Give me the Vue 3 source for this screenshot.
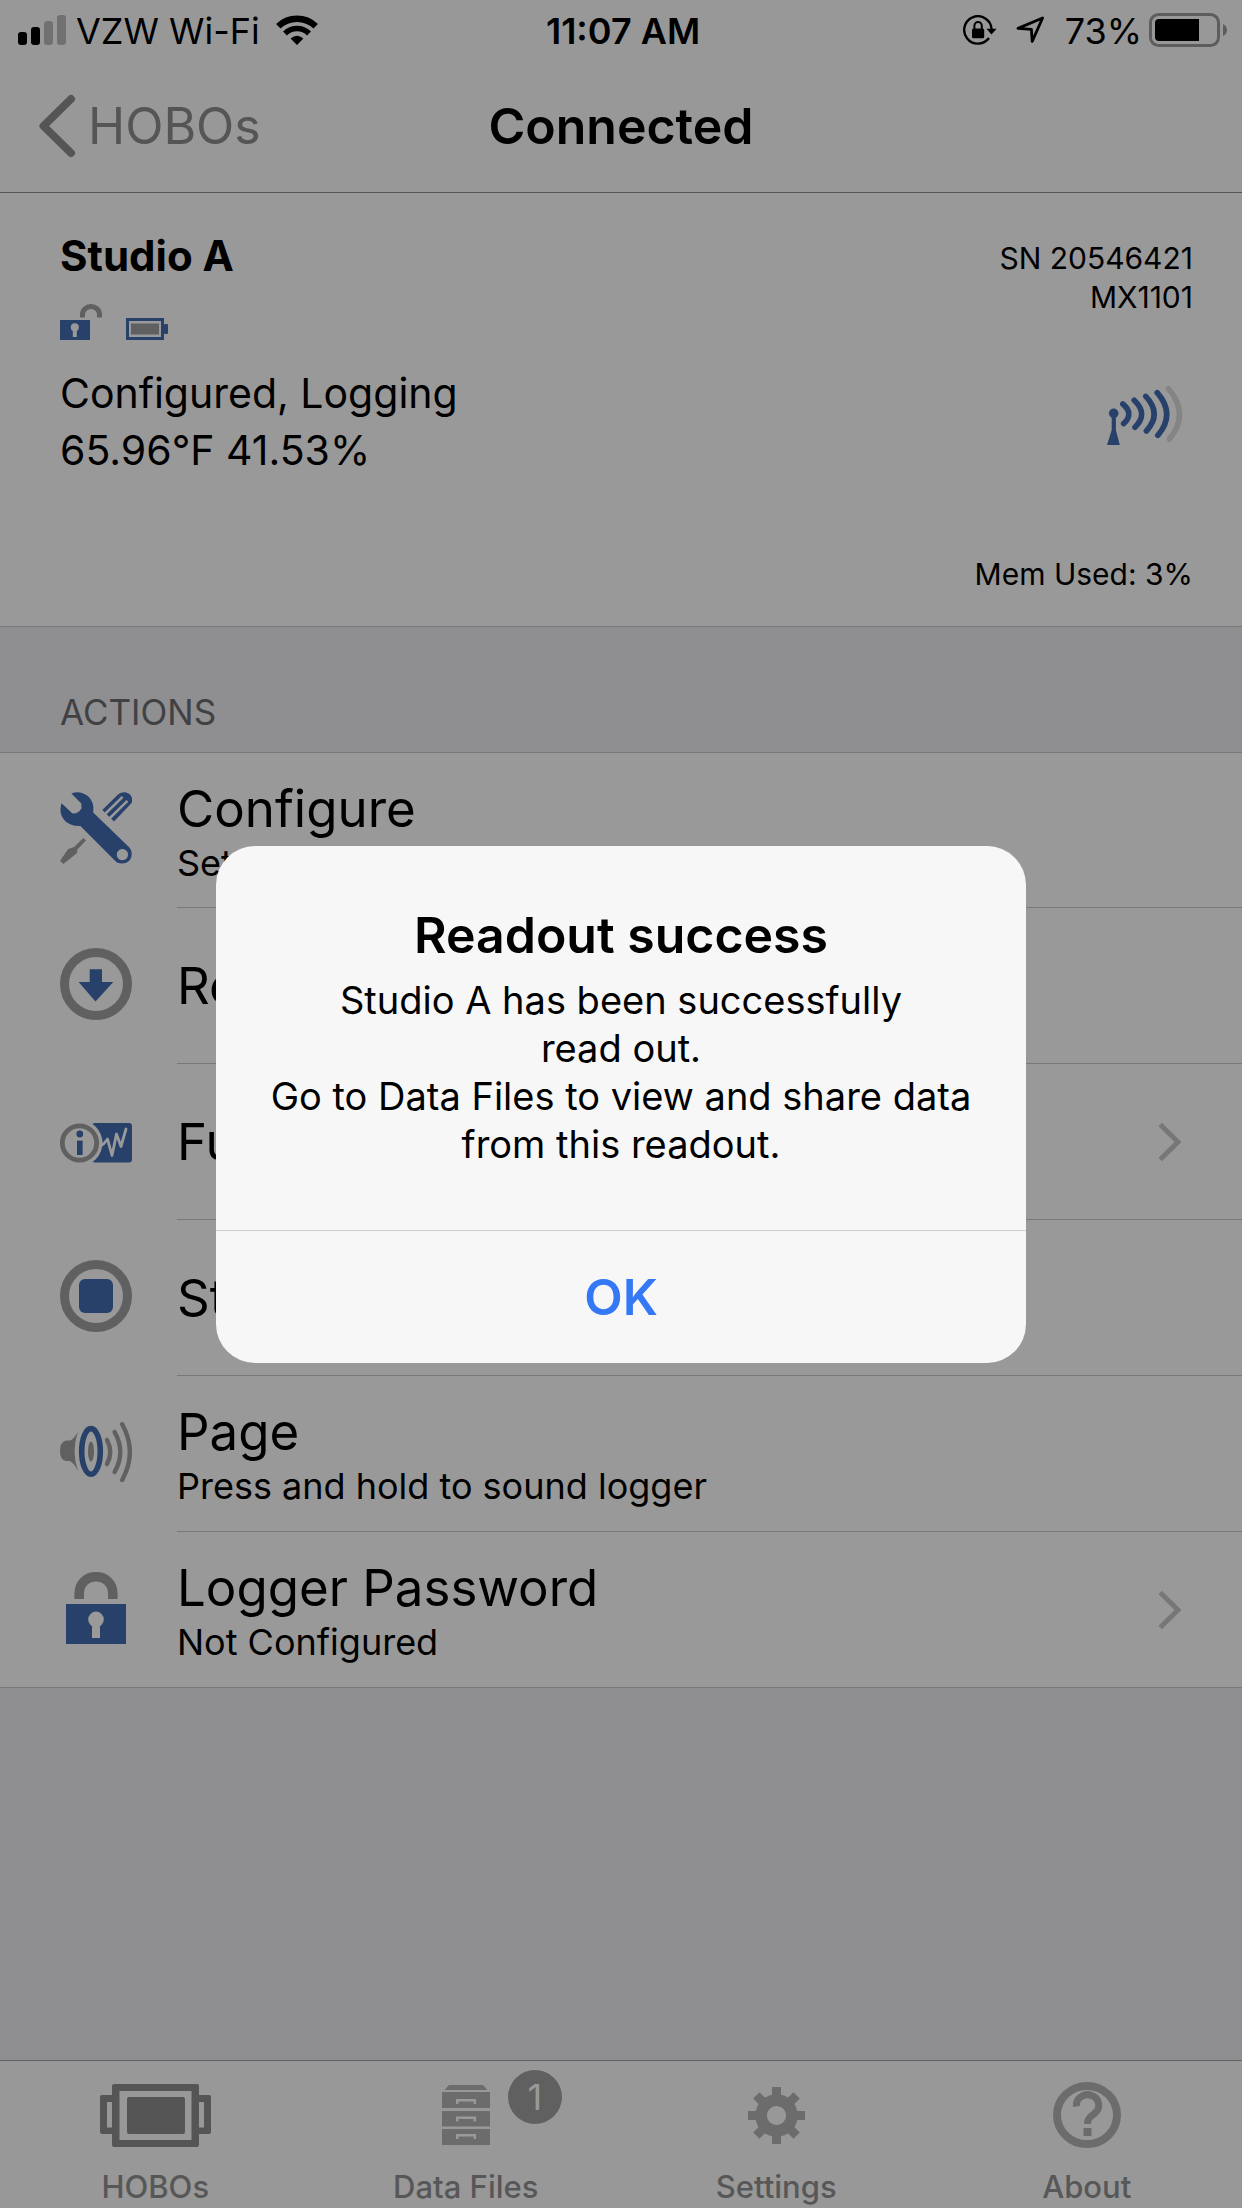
<script setup>
import { ref } from 'vue'

const logger = {
  name: 'Studio A',
  status: 'Configured, Logging',
  reading: '65.96°F 41.53%',
  serial: 'SN 20546421',
  model: 'MX1101',
  memory: 'Mem Used: 3%',
}

const actions = [
  { icon: 'tools', title: 'Configure', detail: 'Set Up Logger' },
  { icon: 'readout', title: 'Readout' },
  { icon: 'details', title: 'Full Status Details', more: true },
  { icon: 'stop', title: 'Stop Logging' },
  { icon: 'page', title: 'Page', detail: 'Press and hold to sound logger' },
  { icon: 'lock', title: 'Logger Password', detail: 'Not Configured', more: true },
]

const tabs = [
  { icon: 'hobos', label: 'HOBOs', active: true },
  { icon: 'files', label: 'Data Files', badge: 1 },
  { icon: 'settings', label: 'Settings' },
  { icon: 'about', label: 'About' },
]

const message =
  'Studio A has been successfully\nread out.\nGo to Data Files to view and share data\nfrom this readout.'

const alertOpen = ref(true)
</script>

<template>
  <div class="screen">
    <header class="top">
      <div class="status">
        <div class="status-side">
          <svg class="signal" width="48" height="30" viewBox="0 0 48 30">
            <rect x="0" y="17" width="9" height="13" rx="3" />
            <rect x="13" y="12" width="9" height="18" rx="3" />
            <rect x="26" y="6" width="9" height="24" rx="3" fill="#bdbdbd" />
            <rect x="39" y="0" width="9" height="30" rx="3" fill="#bdbdbd" />
          </svg>
          <span>VZW Wi-Fi</span>
          <svg class="wifi" width="42" height="30" viewBox="0 0 42 30">
            <g fill="none" stroke="#000">
              <path d="M2.3 11.2A27 27 0 0 1 39.7 11.2" stroke-width="6.4" />
              <path d="M9 18.4A17 17 0 0 1 33 18.4" stroke-width="5.6" />
            </g>
            <path d="M21 30L14.6 23.6Q21 18 27.4 23.6Z" />
          </svg>
        </div>
        <strong class="clock">11:07 AM</strong>
        <div class="status-side right">
          <svg width="34" height="30" viewBox="0 0 34 30">
            <path d="M28.6 14A13.7 13.7 0 1 0 26 23" fill="none" stroke="#000" stroke-width="2.4" />
            <path d="M23.5 13.8H33.6L28.5 19.6Z" />
            <rect x="9" y="13.5" width="12.2" height="9.8" rx="1.6" />
            <path d="M11.4 14V11a3.7 4 0 0 1 7.4 0V14" fill="none" stroke="#000" stroke-width="2" />
          </svg>
          <svg class="locate" width="30" height="28" viewBox="0 0 30 28">
            <path d="M2 12.4L26.6 2L16.2 25.4L15.4 13.4Z" fill="none" stroke="#000" stroke-width="2.8" stroke-linejoin="round" />
          </svg>
          <span>73%</span>
          <svg class="battery" width="79" height="34" viewBox="0 0 79 34">
            <rect x="1.5" y="1.5" width="68" height="31" rx="8" fill="none" stroke="#9b9b9b" stroke-width="3" />
            <path d="M10 6H50V28H10Q6 28 6 24V10Q6 6 10 6Z" />
            <path d="M74 11Q78 13 78 17T74 23Z" fill="#9b9b9b" />
          </svg>
        </div>
      </div>
      <div class="nav">
        <button class="back" type="button">
          <svg width="38" height="64" viewBox="0 0 38 64">
            <path d="M33 5L5.5 32L33 59" fill="none" stroke="#8e8e8e" stroke-width="8" stroke-linecap="round" stroke-linejoin="round" />
          </svg>
          <span>HOBOs</span>
        </button>
        <h1>Connected</h1>
      </div>
    </header>

    <main>
      <section class="summary">
        <div class="info">
          <h2>{{ logger.name }}</h2>
          <div class="flags">
            <svg width="42" height="36" viewBox="0 0 42 36">
              <path d="M22.5 13.5V10.5a8.5 8 0 0 1 17 0V13.5" fill="none" stroke="#a0a0a0" stroke-width="5" />
              <rect y="16" width="30" height="20" fill="#436db3" />
              <circle cx="14.8" cy="23.3" r="4" fill="#fff" />
              <rect x="12.8" y="24" width="4" height="9" fill="#fff" />
            </svg>
            <svg width="42" height="22" viewBox="0 0 42 22">
              <rect x="1.5" y="1.5" width="35" height="19" fill="none" stroke="#436db3" stroke-width="3" />
              <rect x="38" y="6" width="4" height="10" rx="1" fill="#436db3" />
              <rect x="5" y="5.5" width="28" height="11" fill="#a0a0a0" />
            </svg>
          </div>
          <p>{{ logger.status }}</p>
          <p>{{ logger.reading }}</p>
        </div>
        <div class="meta">
          <p>{{ logger.serial }}</p>
          <p>{{ logger.model }}</p>
          <svg width="86" height="60" viewBox="0 0 86 60">
            <g fill="#436db3">
              <circle cx="6.7" cy="27.3" r="4.8" />
              <path d="M4.7 30H8.9V44L12.8 59H0L4.7 44Z" />
            </g>
            <g fill="none" stroke="#436db3" stroke-width="5.6" stroke-linecap="round">
              <path d="M15.8 18Q27.4 27.8 16.6 37.6" />
              <path d="M27.2 14.2Q41.7 27.8 28 41.2" />
              <path d="M38.8 10.4Q55.2 27.8 39.4 45" />
              <path d="M50.2 6.6Q69 28 50.8 49.4" />
              <path d="M61.6 2.8Q83 28 62.4 53" stroke="#dcdcdc" />
            </g>
          </svg>
          <p class="memory">{{ logger.memory }}</p>
        </div>
      </section>

      <h3>ACTIONS</h3>
      <ul class="actions">
        <li v-for="a in actions" :key="a.title">
          <button type="button" class="action">
            <span class="icon">
              <svg v-if="a.icon === 'tools'" width="72" height="72" viewBox="0 0 72 72">
                <path fill="#436db3" fill-rule="evenodd" d="M11.4 1.4C22-2.5 33 5 33.4 15.5L33.2 20.4L69.4 55.6C72 58.5 72.5 63.5 70.5 67C67.5 72 60 73 55.8 69.6L20.4 34C9 35 0 27 .5 17.500Q.6 14 1.5 11.2L12.5 21.6Q18.5 21.8 21.5 16.2L21.3 11.6ZM62.4 57a5.600 5.600 0 1 0 .01 0Z" />
                <path fill="#436db3" d="M42.3 18L58 2.5C65-3.5 75 3 71.6 11L54 29.4Z" />
                <path d="M44.5 22.5L62.6 4.8M49 27L67.4 8.8" fill="none" stroke="#fff" stroke-width="2.5" />
                <path fill="#a0a0a0" d="M23.3 46L26 48.5L17.4 57.5L17 61L14 63.5L3.3 72L0 68.7L8.3 57L14 55Z" />
              </svg>
              <svg v-else-if="a.icon === 'readout'" width="72" height="72" viewBox="0 0 72 72">
                <circle cx="36" cy="36" r="31.5" fill="none" stroke="#a0a0a0" stroke-width="9" />
                <path fill="#436db3" d="M29.7 21.3H42V34H53.3L35.5 53.4L18.6 34H29.7Z" />
              </svg>
              <svg v-else-if="a.icon === 'details'" width="72" height="48" viewBox="0 -6 72 48">
                <rect x="32" y="1" width="40" height="39.5" rx="3" fill="#436db3" />
                <circle cx="19.5" cy="21" r="23" fill="#fff" />
                <circle cx="19.5" cy="21" r="17.2" fill="none" stroke="#a0a0a0" stroke-width="4.8" />
                <circle cx="19.8" cy="12" r="3.4" fill="#436db3" />
                <rect x="17" y="18.6" width="5.6" height="14.4" fill="#436db3" />
                <path d="M40 24L44 21.5L47.5 17L52 33.5L56.5 12L61 24.5L66 7" fill="none" stroke="#fff" stroke-width="2.8" stroke-linejoin="round" stroke-linecap="round" />
              </svg>
              <svg v-else-if="a.icon === 'stop'" width="72" height="72" viewBox="0 0 72 72">
                <circle cx="36" cy="36" r="31.5" fill="none" stroke="#a0a0a0" stroke-width="9" />
                <rect x="19" y="19" width="34" height="34" rx="6" fill="#436db3" />
              </svg>
              <svg v-else-if="a.icon === 'page'" width="72" height="60" viewBox="0 0 72 60">
                <path fill="#a0a0a0" d="M18 9.5Q11 29 18 49Q14 41 10 39H6Q0 38 0 29T6 18.6H10Q14 17 18 9.5Z" />
                <ellipse cx="31" cy="29.4" rx="9.3" ry="22.8" fill="none" stroke="#436db3" stroke-width="5.6" />
                <ellipse cx="31" cy="29.4" rx="3" ry="10" fill="#a0a0a0" />
                <g fill="none" stroke="#a0a0a0" stroke-width="4.4" stroke-linecap="round">
                  <path d="M47 18Q53.5 30 47 42" />
                  <path d="M54.6 10Q66 30 54.6 50" />
                  <path d="M62.2 2.2Q77.5 30 62.2 58" />
                </g>
              </svg>
              <svg v-else width="72" height="72" viewBox="0 0 72 72">
                <path d="M19.2 27V22C19.200-1 52.800-1 52.8 22V27" fill="none" stroke="#a0a0a0" stroke-width="9.6" />
                <rect x="6" y="32" width="60" height="40" fill="#436db3" />
                <circle cx="36" cy="47.4" r="7.8" fill="#fff" />
                <rect x="32" y="50" width="8" height="16" fill="#fff" />
              </svg>
            </span>
            <span class="labels">
              <span class="title">{{ a.title }}</span>
              <span v-if="a.detail" class="detail">{{ a.detail }}</span>
            </span>
            <svg v-if="a.more" width="24" height="40" viewBox="0 0 24 40">
              <path d="M2.2 2.5L20 20L2.2 37.5" fill="none" stroke="#c7c7cc" stroke-width="5" />
            </svg>
          </button>
        </li>
      </ul>
    </main>

    <nav class="tabs">
      <a v-for="t in tabs" :key="t.label" href="#" class="tab">
        <span class="tab-icon">
          <svg v-if="t.icon === 'hobos'" width="111" height="63" viewBox="0 0 111 63" fill="#8e8e8e">
            <path fill-rule="evenodd" d="M14 0H97Q99 0 99 2V61Q99 63 97 63H14Q12 63 12 61V2Q12 0 14 0ZM19.5 7V56H91.5V7Z" />
            <rect x="27" y="13" width="58" height="37" rx="2" />
            <path fill-rule="evenodd" d="M2 11H12V50H2Q0 50 0 48V13Q0 11 2 11ZM7 18V43.5H12V18ZM99 11H109Q111 11 111 13V48Q111 50 109 50H99ZM99 18V43.5H104V18Z" />
          </svg>
          <svg v-else-if="t.icon === 'files'" width="48" height="60" viewBox="0 0 48 60">
            <path fill="#b5b5b5" d="M7 0H41L45.5 5H2.5ZM0 7H48V23H0ZM0 26H48V41.5H0ZM0 44H48V60H0Z" />
            <path d="M15.2 19V15.2H32.8V19M15.2 36.5V32.7H32.8V36.5M15.2 54V50.2H32.8V54" fill="none" stroke="#fff" stroke-width="2.5" />
          </svg>
          <svg v-else-if="t.icon === 'settings'" width="57" height="57" viewBox="-28.5 -28.5 57 57">
            <circle r="15.4" fill="none" stroke="#b5b5b5" stroke-width="11.6" />
            <g fill="#b5b5b5">
              <path d="M-4.5-28.5h9v9h-9ZM-4.5 19.5h9v9h-9ZM-28.5-4.5v9h9v-9ZM19.5-4.5v9h9v-9Z" />
              <path transform="rotate(45)" d="M-4.5-28.5h9v9h-9ZM-4.5 19.5h9v9h-9ZM-28.5-4.5v9h9v-9ZM19.5-4.5v9h9v-9Z" />
            </g>
          </svg>
          <svg v-else width="68" height="66" viewBox="0 0 68 66">
            <ellipse cx="34" cy="33" rx="30" ry="29" fill="none" stroke="#b5b5b5" stroke-width="8" />
            <path d="M23.4 24.5A11.2 10.5 0 1 1 42 31C37 35 34.5 36.5 34.5 42" fill="none" stroke="#b5b5b5" stroke-width="7" />
            <rect x="30.5" y="46" width="8" height="8" fill="#b5b5b5" />
          </svg>
          <span v-if="t.badge" class="badge">{{ t.badge }}</span>
        </span>
        <span class="tab-label">{{ t.label }}</span>
      </a>
    </nav>

    <div v-if="alertOpen" class="backdrop">
      <div class="alert" role="alertdialog" aria-labelledby="alert-title" aria-describedby="alert-message">
        <div class="alert-body">
          <h2 id="alert-title">Readout success</h2>
          <p id="alert-message">{{ message }}</p>
        </div>
        <button type="button" class="ok" @click="alertOpen = false">OK</button>
      </div>
    </div>
  </div>
</template>

<style>
body {
  margin: 0;
  background: #efeff4;
}
</style>

<style scoped>
.screen {
  position: relative;
  display: flex;
  flex-direction: column;
  min-height: 100vh;
  background: #efeff4;
  color: #000;
  font-family: Inter, "Liberation Sans", sans-serif;
  font-size: 36px;
}

h1, h2, h3, p, ul {
  margin: 0;
  padding: 0;
}

button {
  border: 0;
  padding: 0;
  background: none;
  color: inherit;
  font: inherit;
}

svg {
  flex: none;
  display: block;
}

.top {
  background: #fefefe;
  border-bottom: 1px solid #8e8e8e;
}

.status {
  display: flex;
  align-items: center;
  height: 60px;
  padding: 0 14px 0 18px;
  line-height: 44px;
}

.status span,
.clock {
  padding-top: 2px;
}

.status-side {
  flex: 1;
  display: flex;
  align-items: center;
}

.right {
  justify-content: flex-end;
}

.signal {
  margin-right: 10px;
}

.wifi {
  margin-left: 16px;
}

.clock {
  font-weight: 600;
}

.locate {
  margin: 0 19px;
}

.battery {
  margin-left: 7px;
}

.nav {
  display: grid;
  grid-template-columns: 1fr auto 1fr;
  align-items: center;
  height: 132px;
  padding: 0 38px;
}

.back {
  display: flex;
  align-items: center;
  gap: 12px;
  color: #8e8e8e;
  font-size: 50px;
}

h1 {
  font-size: 50px;
  font-weight: 600;
}

.summary {
  display: flex;
  justify-content: space-between;
  padding: 35px 49px 32px 60px;
  background: #fff;
  border-bottom: 1px solid #c8c7cc;
}

.info {
  font-size: 41px;
  line-height: 57px;
}

.info h2 {
  font-size: 42px;
  font-weight: 700;
  line-height: 56px;
}

.flags {
  display: flex;
  align-items: flex-end;
  gap: 24px;
  margin: 20px 0 25px;
}

.meta {
  display: flex;
  flex-direction: column;
  align-items: flex-end;
  padding-top: 11px;
  font-size: 30px;
  line-height: 39px;
}

.meta svg {
  margin: 69px 0 109px;
}

h3 {
  padding: 63px 60px 18px;
  border-bottom: 1px solid #c8c7cc;
  color: #6d6d72;
  font-size: 35px;
  font-weight: 400;
  line-height: 44px;
}

.actions {
  list-style: none;
  background: #fff;
}

.action {
  display: flex;
  align-items: center;
  gap: 45px;
  box-sizing: border-box;
  width: 100%;
  min-height: 156px;
  padding: 0 60px;
  background: linear-gradient(#c8c7cc, #c8c7cc) 177px 100% / 100% 1px no-repeat;
  text-align: left;
}

li:first-child .action {
  min-height: 155px;
}

li:last-child .action {
  background-position: 0 100%;
}

.icon {
  padding-bottom: 5px;
}

.labels {
  flex: 1;
  display: flex;
  flex-direction: column;
}

.title {
  font-size: 51px;
  line-height: 64px;
}

.detail {
  font-size: 36px;
  line-height: 44px;
}

.tabs {
  display: flex;
  margin-top: auto;
  padding: 21px 0 3px;
  background: #fefefe;
  border-top: 1px solid #a5a5a8;
}

.tab {
  flex: 1;
  display: flex;
  flex-direction: column;
  align-items: center;
  gap: 21px;
  color: #929292;
  text-decoration: none;
}

.tab-icon {
  position: relative;
  display: flex;
  align-items: center;
  height: 66px;
}

.badge {
  position: absolute;
  left: 66px;
  top: -12px;
  width: 54px;
  border-radius: 50%;
  background: #a0a0a0;
  color: #fff;
  text-align: center;
  line-height: 54px;
}

.tab-label {
  font-size: 31px;
  font-weight: 500;
  line-height: 36px;
}

.backdrop {
  position: absolute;
  inset: 0;
  display: flex;
  align-items: center;
  justify-content: center;
  background: rgba(0, 0, 0, 0.4);
}

.alert {
  width: 810px;
  overflow: hidden;
  border-radius: 39px;
  background: #f7f7f7;
  text-align: center;
}

.alert-body {
  padding: 57px 24px 62px;
}

.alert-body h2 {
  font-size: 50px;
  font-weight: 600;
  line-height: 64px;
}

.alert-body p {
  margin-top: 9px;
  font-size: 38px;
  line-height: 48px;
  white-space: pre-line;
}

.ok {
  width: 100%;
  border-top: 1px solid #cdcdd2;
  color: #3478f6;
  font-size: 50px;
  font-weight: 600;
  line-height: 132px;
}
</style>
